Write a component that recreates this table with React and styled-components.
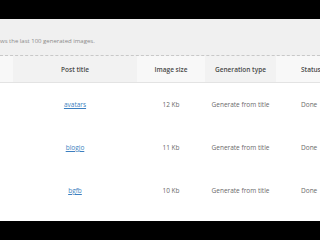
import React from 'react';
import styled, { createGlobalStyle } from 'styled-components';

const GlobalStyle = createGlobalStyle`
  html, body {
    margin: 0;
    padding: 0;
    background: #000;
  }
  body {
    font-family: "Open Sans", "Noto Sans", "Liberation Sans", sans-serif;
  }
`;

const Frame = styled.div`
  margin-top: 19px;
  width: 320px;
  height: 202px;
  background: #fff;
  overflow: hidden;
`;

const Intro = styled.div`
  height: 37px;
  box-sizing: border-box;
  background: #f0f0f0;
  border-bottom: 1px dashed #c8c8c8;
  padding: 6px 0 0 0;
  color: #8a8a8a;
  font-size: 6px;
  line-height: 11px;
  overflow: hidden;
`;

const IntroLine = styled.div`
  margin-left: ${props => props.shift}px;
  white-space: nowrap;
`;

const Table = styled.table`
  border-collapse: collapse;
  table-layout: fixed;
  width: 351px;
`;

const HeadCell = styled.th`
  height: 26px;
  padding: 0;
  background: ${props => (props.light ? '#f8f8f8' : '#f2f2f2')};
  border-bottom: 1px solid #e3e3e3;
  color: #4a4a4a;
  font-size: 6.5px;
  font-weight: 600;
  text-align: ${props => props.align || 'center'};
  padding-left: ${props => props.indent || 0}px;
  white-space: nowrap;
`;

const Cell = styled.td`
  height: 43px;
  padding: 0;
  color: #6a6a6a;
  font-size: 6.5px;
  text-align: ${props => props.align || 'center'};
  padding-left: ${props => props.indent || 0}px;
  white-space: nowrap;
`;

const TitleLink = styled.a`
  color: #3c7fc0;
  text-decoration: underline;
`;

const rows = [
  { title: 'avatars', size: '12 Kb', type: 'Generate from title', status: 'Done' },
  { title: 'blogjo', size: '11 Kb', type: 'Generate from title', status: 'Done' },
  { title: 'bgfb', size: '10 Kb', type: 'Generate from title', status: 'Done' },
];

export default function App() {
  return (
    <>
      <GlobalStyle />
      <Frame>
        <Intro>
          <IntroLine shift={-3}>l</IntroLine>
          <IntroLine shift={0}>ws the last 100 generated images.</IntroLine>
        </Intro>
        <Table>
          <colgroup>
            <col style={{ width: 13 }} />
            <col style={{ width: 124 }} />
            <col style={{ width: 68 }} />
            <col style={{ width: 71 }} />
            <col style={{ width: 75 }} />
          </colgroup>
          <thead>
            <tr>
              <HeadCell light />
              <HeadCell>Post title</HeadCell>
              <HeadCell light>Image size</HeadCell>
              <HeadCell>Generation type</HeadCell>
              <HeadCell light align="left" indent={25}>Status</HeadCell>
            </tr>
          </thead>
          <tbody>
            {rows.map(row => (
              <tr key={row.title}>
                <Cell />
                <Cell><TitleLink href="#">{row.title}</TitleLink></Cell>
                <Cell>{row.size}</Cell>
                <Cell>{row.type}</Cell>
                <Cell align="left" indent={25}>{row.status}</Cell>
              </tr>
            ))}
          </tbody>
        </Table>
      </Frame>
    </>
  );
}
